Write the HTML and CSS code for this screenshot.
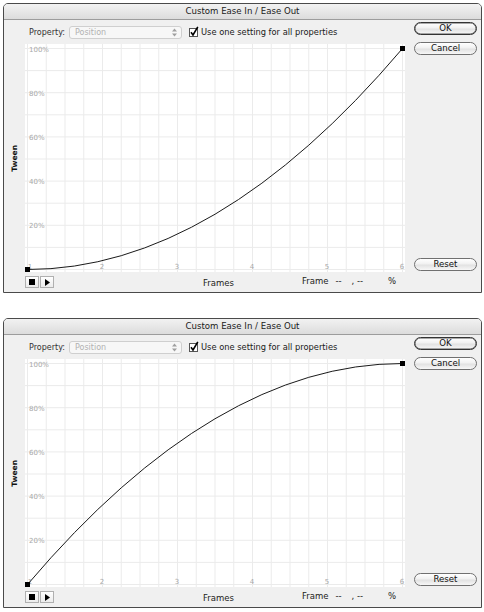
FILE: index.html
```html
<!DOCTYPE html>
<html>
<head>
<meta charset="utf-8">
<link rel="stylesheet" href="styles.css">
</head>
<body>
<div class="page">
  <div class="dialog">
    <div class="titlebar">Custom Ease In / Ease Out</div>
    <div class="body">
      <div class="main">
        <div class="controls">
          <span class="prop-label">Property:</span>
          <div class="select"><span>Position</span><svg class="arrows" width="5" height="9" viewBox="0 0 5 9"><path d="M0 3.5L2.5 0.5L5 3.5Z M0 5.5L2.5 8.5L5 5.5Z" fill="#a0a0a0"/></svg></div>
          <span class="check"><svg width="10" height="11" viewBox="0 0 10 11"><rect x="0.5" y="2.5" width="8" height="8" fill="#fff" stroke="#555"/><path d="M2 6.3 L4 9 L8.8 0.8" fill="none" stroke="#000" stroke-width="1.6"/></svg></span>
          <span class="check-label">Use one setting for all properties</span>
        </div>
        <div class="chart-row">
          <div class="tween"><span>Tween</span></div>
          <svg class="plot" width="380" height="228" viewBox="0 0 380 228">
            <rect width="380" height="228" fill="#fff"/>
            <g stroke="#ebebeb" stroke-width="1">
              <path d="M2.5 0V228M21.25 0V228M40 0V228M58.75 0V228M77.5 0V228M96.25 0V228M115 0V228M133.75 0V228M152.5 0V228M171.25 0V228M190 0V228M208.75 0V228M227.5 0V228M246.25 0V228M265 0V228M283.75 0V228M302.5 0V228M321.25 0V228M340 0V228M358.75 0V228M377.5 0V228"/>
              <path d="M0 225.5H380M0 203.4H380M0 181.3H380M0 159.2H380M0 137.1H380M0 115H380M0 92.9H380M0 70.8H380M0 48.7H380M0 26.6H380M0 4.5H380"/>
            </g>
            <g class="axis" fill="#a8a8a8">
              <text x="4" y="7.5">100%</text>
              <text x="4" y="51.7">80%</text>
              <text x="4" y="95.9">60%</text>
              <text x="4" y="140.1">40%</text>
              <text x="4" y="184.3">20%</text>
              <text x="5" y="225" text-anchor="middle">1</text>
              <text x="77" y="225" text-anchor="middle">2</text>
              <text x="152" y="225" text-anchor="middle">3</text>
              <text x="227" y="225" text-anchor="middle">4</text>
              <text x="302" y="225" text-anchor="middle">5</text>
              <text x="377" y="225" text-anchor="middle">6</text>
            </g>
            <path d="M2.5 225.5 Q190 225.5 377.5 4.5" fill="none" stroke="#1a1a1a" stroke-width="1"/>
            <rect x="0" y="223" width="5" height="5" fill="#000"/>
            <rect x="375" y="2" width="5" height="5" fill="#000"/>
          </svg>
        </div>
        <div class="strip">
          <div class="play">
            <span class="pbtn"><svg width="6" height="6"><rect width="6" height="6" fill="#000"/></svg></span>
            <span class="pbtn"><svg width="5" height="7"><path d="M0 0L5 3.5L0 7Z" fill="#000"/></svg></span>
          </div>
          <span class="frames">Frames</span>
          <span class="frame">Frame</span>
          <span class="dash1">--</span>
          <span class="dash2">, --</span>
          <span class="pct">%</span>
        </div>
      </div>
      <div class="side">
        <div class="btn default">OK</div>
        <div class="btn">Cancel</div>
        <div class="btn reset">Reset</div>
      </div>
    </div>
  </div>

  <div class="dialog">
    <div class="titlebar">Custom Ease In / Ease Out</div>
    <div class="body">
      <div class="main">
        <div class="controls">
          <span class="prop-label">Property:</span>
          <div class="select"><span>Position</span><svg class="arrows" width="5" height="9" viewBox="0 0 5 9"><path d="M0 3.5L2.5 0.5L5 3.5Z M0 5.5L2.5 8.5L5 5.5Z" fill="#a0a0a0"/></svg></div>
          <span class="check"><svg width="10" height="11" viewBox="0 0 10 11"><rect x="0.5" y="2.5" width="8" height="8" fill="#fff" stroke="#555"/><path d="M2 6.3 L4 9 L8.8 0.8" fill="none" stroke="#000" stroke-width="1.6"/></svg></span>
          <span class="check-label">Use one setting for all properties</span>
        </div>
        <div class="chart-row">
          <div class="tween"><span>Tween</span></div>
          <svg class="plot" width="380" height="228" viewBox="0 0 380 228">
            <rect width="380" height="228" fill="#fff"/>
            <g stroke="#ebebeb" stroke-width="1">
              <path d="M2.5 0V228M21.25 0V228M40 0V228M58.75 0V228M77.5 0V228M96.25 0V228M115 0V228M133.75 0V228M152.5 0V228M171.25 0V228M190 0V228M208.75 0V228M227.5 0V228M246.25 0V228M265 0V228M283.75 0V228M302.5 0V228M321.25 0V228M340 0V228M358.75 0V228M377.5 0V228"/>
              <path d="M0 225.5H380M0 203.4H380M0 181.3H380M0 159.2H380M0 137.1H380M0 115H380M0 92.9H380M0 70.8H380M0 48.7H380M0 26.6H380M0 4.5H380"/>
            </g>
            <g class="axis" fill="#a8a8a8">
              <text x="4" y="7.5">100%</text>
              <text x="4" y="51.7">80%</text>
              <text x="4" y="95.9">60%</text>
              <text x="4" y="140.1">40%</text>
              <text x="4" y="184.3">20%</text>
              <text x="5" y="225" text-anchor="middle">1</text>
              <text x="77" y="225" text-anchor="middle">2</text>
              <text x="152" y="225" text-anchor="middle">3</text>
              <text x="227" y="225" text-anchor="middle">4</text>
              <text x="302" y="225" text-anchor="middle">5</text>
              <text x="377" y="225" text-anchor="middle">6</text>
            </g>
            <path d="M2.5 225.5 Q190 4.5 377.5 4.5" fill="none" stroke="#1a1a1a" stroke-width="1"/>
            <rect x="0" y="223" width="5" height="5" fill="#000"/>
            <rect x="375" y="2" width="5" height="5" fill="#000"/>
          </svg>
        </div>
        <div class="strip">
          <div class="play">
            <span class="pbtn"><svg width="6" height="6"><rect width="6" height="6" fill="#000"/></svg></span>
            <span class="pbtn"><svg width="5" height="7"><path d="M0 0L5 3.5L0 7Z" fill="#000"/></svg></span>
          </div>
          <span class="frames">Frames</span>
          <span class="frame">Frame</span>
          <span class="dash1">--</span>
          <span class="dash2">, --</span>
          <span class="pct">%</span>
        </div>
      </div>
      <div class="side">
        <div class="btn default">OK</div>
        <div class="btn">Cancel</div>
        <div class="btn reset">Reset</div>
      </div>
    </div>
  </div>
</div>
</body>
</html>
```
FILE: styles.css
```css
* { box-sizing: border-box; }
html, body { margin: 0; padding: 0; background: #fff; }
body {
  font-family: "DejaVu Sans", "Liberation Sans", sans-serif;
  font-size: 8.5px;
  color: #222;
}
.page {
  display: flex;
  flex-direction: column;
  gap: 25px;
  padding: 3px 2px 0 3px;
}
.dialog {
  width: 479px;
  height: 290px;
  border: 1px solid #4a4a4a;
  border-radius: 5px 5px 0 0;
  background: #f0f0f0;
  display: flex;
  flex-direction: column;
  overflow: hidden;
}
.titlebar {
  height: 16px;
  flex: none;
  text-align: center;
  line-height: 15px;
  font-size: 8.6px;
  color: #1a1a1a;
  background: linear-gradient(#f2f2f2, #dcdcdc);
  border-bottom: 1px solid #9c9c9c;
}
.body {
  flex: 1;
  display: flex;
}
.main {
  width: 401px;
  display: flex;
  flex-direction: column;
}
.controls {
  height: 24px;
  display: flex;
  align-items: center;
  padding-left: 23px;
}
.prop-label {
  color: #333;
  width: 38px;
  text-align: right;
  font-size: 8px;
  white-space: nowrap;
}
.select {
  margin-left: 4px;
  width: 113px;
  height: 13px;
  border: 1px solid #cfcfcf;
  border-radius: 3px;
  background: #f7f7f7;
  display: flex;
  align-items: center;
  justify-content: space-between;
  padding: 0 4px 0 5px;
  color: #b2b2b2;
  font-size: 8px;
}
.arrows { display: block; }
.check { margin-left: 7px; display: flex; align-items: center; height: 11px; margin-top: -2px; }
.check-label { margin-left: 2px; color: #1a1a1a; font-size: 8.3px; }
.chart-row {
  height: 228px;
  display: flex;
}
.tween {
  width: 21px;
  display: flex;
  align-items: center;
  justify-content: center;
}
.tween span {
  writing-mode: vertical-rl;
  transform: rotate(180deg);
  font-weight: bold;
  font-size: 7.5px;
  color: #111;
}
.plot { display: block; }
.axis { font-family: "DejaVu Sans", sans-serif; font-size: 7px; }
.strip {
  height: 20px;
  display: flex;
  align-items: center;
  padding-left: 21px;
  color: #222;
}
.play { display: flex; gap: 1px; }
.pbtn {
  width: 14px;
  height: 12px;
  background: linear-gradient(#ffffff, #ececec);
  border: 1px solid #b0b0b0;
  display: flex;
  align-items: center;
  justify-content: center;
}
.frames { margin-left: 149px; margin-top: 2px; }
.frame { margin-left: 68px; margin-top: -2px; }
.dash1 { margin-left: 7px; margin-top: -2px; }
.dash2 { margin-left: 10px; margin-top: -2px; }
.pct { margin-left: 25px; margin-top: -2px; }
.side {
  flex: 1;
  display: flex;
  flex-direction: column;
  padding: 2px 3px 21px 9px;
}
.btn {
  height: 13px;
  width: 63px;
  border: 1px solid #707070;
  border-radius: 7px;
  background: linear-gradient(#ffffff 0%, #f1f1f1 45%, #e2e2e2 55%, #f7f7f7 100%);
  text-align: center;
  line-height: 11px;
  font-size: 8.6px;
  color: #111;
}
.btn + .btn { margin-top: 7px; }
.btn.default { border-color: #333; box-shadow: inset 0 0 0 0.5px #555; }
.btn.reset { margin-top: auto; }
```
